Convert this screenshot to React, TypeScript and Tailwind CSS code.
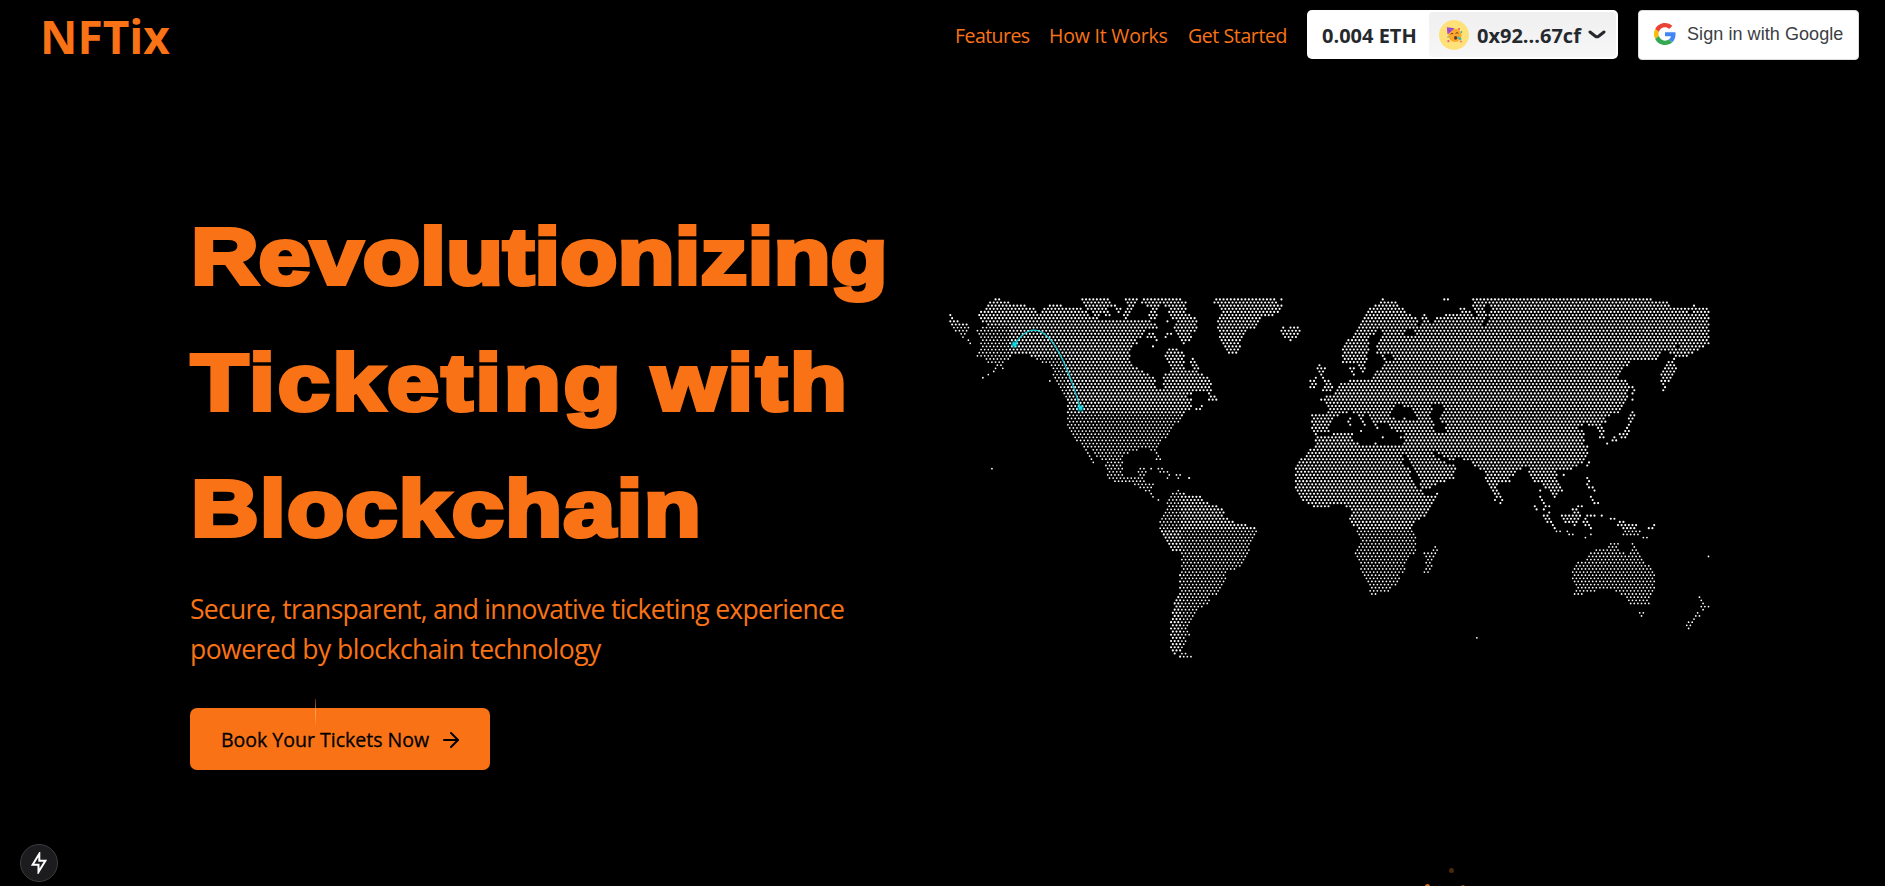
import React from "react";
import { ArrowRight } from "lucide-react";

type Point = [number, number];
type Region = { x: number; y: number; land: string[]; water?: string[]; islands?: string };

const STEP_X = 3.619;
const STEP_Y = 3.134;
const MAP_W = 768;
const MAP_H = 384;
const MAP_X = 947;
const MAP_Y = 296;

// Outlines are given in thirds of a pixel, relative to each region's origin.
const REGIONS: Region[] = [
  {
    x: 940,
    y: 290,
    land: [
      "29,66 36,66 42,85 56,92 72,96 90,108 84,130 70,145 60,132 40,124 29,105",
      "112,68 125,60 140,48 148,34 172,22 185,30 210,32 212,42 250,42 262,52 285,50 292,66 305,62 315,50 332,42 345,42 358,50 362,40 370,50 385,48 418,48 425,60 440,64 450,80 480,84 510,86 545,84 560,80 575,88 600,92 650,94 650,115 620,120 610,134 590,148 592,160 580,170 570,180 568,205 580,225 595,238 628,250 645,262 648,295 668,295 668,255 685,246 688,235 676,215 672,196 680,188 674,172 700,172 712,180 728,185 735,205 735,238 752,240 750,205 764,205 772,225 776,240 785,255 785,302 770,308 740,310 732,318 758,320 755,335 758,350 745,362 730,368 722,385 710,398 700,410 690,424 682,440 665,450 655,466 648,474 656,490 662,510 648,508 640,484 612,474 590,478 570,486 552,497 545,520 546,545 555,566 590,562 592,542 620,540 612,575 520,575 500,560 498,535 490,512 462,502 445,472 438,474 450,502 462,518 452,516 438,496 426,466 408,450 395,435 386,418 380,400 380,362 376,330 372,312 358,308 352,280 342,260 332,240 322,222 300,218 288,204 270,196 235,190 215,197 205,208 188,208 192,236 178,234 160,212 150,220 134,208 132,200 108,202 108,190 122,180 118,160 122,142 108,130 108,114 138,108 125,92 114,84",
      "422,22 512,22 512,42 530,44 545,60 535,70 520,50 505,56 515,82 500,82 485,70 460,82 455,66 430,50 424,40",
      "552,22 592,22 588,42 575,50 568,66 558,88 546,82 558,56",
      "602,22 712,22 738,32 740,70 770,85 775,118 750,124 755,150 735,152 725,168 714,150 700,125 705,95 690,75 680,48 660,45 650,58 650,90 620,95 625,65 632,50 605,40",
      "618,142 626,128 644,126 650,150 640,152 632,140",
    ],
    water: ["655,68 695,76 700,100 655,100"],
    islands:
      "84,149 89,158 172,222 166,232 160,242 144,251 127,262 328,270 155,535 638,167 680,130 690,130 676,138 680,92 770,356 778,356 632,535 655,535 665,535 660,544 670,544 682,544 682,553 708,553 719,553 714,562 746,563",
  },
  {
    x: 1200,
    y: 290,
    land: [
      "-5,246 8,250 25,262 36,280 30,302 -5,303",
      "22,298 34,300 34,315 48,318 57,338 45,333 20,332",
      "-5,340 8,340 6,352 -5,358",
      "38,32 56,22 225,22 228,40 247,42 232,68 205,80 185,82 170,110 140,120 125,150 118,170 116,200 108,190 82,192 70,165 55,140 50,90 62,70 58,50 40,42",
      "240,108 255,108 262,118 270,110 285,108 298,110 303,125 290,142 270,155 258,145 245,132",
      "423,218 422,180 435,155 455,140 475,110 490,80 505,52 525,42 545,24 552,30 565,24 572,32 590,32 592,45 615,60 640,75 656,92 652,108 600,112 550,112 530,120 510,145 502,165 505,185 498,215 495,246 478,243 472,225 465,215 445,218",
      "442,232 455,235 465,220 464,258 445,250",
      "548,112 600,110 655,108 664,100 668,70 678,70 685,102 700,90 715,78 745,68 785,70 785,510 768,506 770,535 756,572 655,572 640,540 625,510 612,488 608,468 612,435 605,425 590,425 565,415 562,400 548,396 534,398 542,424 528,414 515,386 500,364 488,372 500,406 488,404 474,384 460,368 445,364 430,368 412,375 400,385 388,400 384,424 332,426 332,372 380,370 386,355 378,338 360,330 362,324 372,324 372,316 400,314 408,294 415,278 440,278 445,268 500,262 515,268 525,250 535,235 550,218 545,200 527,192 530,150 545,130",
      "345,428 368,438 400,430 455,430 460,450 490,465 510,468 525,456 540,468 610,468 606,495 616,530 632,572 282,572 284,530 298,510 312,492 330,475 345,458",
      "348,222 360,222 378,235 368,250 385,270 399,290 397,302 362,302 372,285 362,262 350,240",
      "328,268 345,258 352,275 345,293 326,293",
    ],
    water: [
      "568,374 582,350 597,342 610,356 630,352 640,365 652,385 620,390 585,388",
      "698,342 728,342 726,360 718,375 722,395 738,402 732,425 705,425 700,400 692,370",
      "612,115 635,112 640,134 616,140",
      "554,190 576,190 576,209 554,208",
      "698,484 720,490 742,508 785,506 785,520 742,520 720,510",
    ],
    islands: "243,27 732,27 742,27 450,385 445,393 450,402 482,421 525,403 547,440 602,440 612,384 270,148",
  },
  {
    x: 1460,
    y: 290,
    land: [
      "35,22 575,22 580,30 625,32 632,48 685,50 690,70 696,42 705,42 715,52 747,52 749,162 735,170 715,180 695,190 670,202 645,202 640,186 655,165 645,165 632,190 625,182 602,183 600,202 585,212 515,210 500,225 485,245 470,264 500,266 508,290 500,318 498,335 488,352 475,370 440,376 435,396 420,398 430,420 434,444 416,444 410,410 405,402 385,408 375,402 352,410 370,420 375,445 372,460 384,468 384,495 375,512 350,528 330,542 300,542 290,545 290,575 215,575 200,530 175,538 150,560 150,575 75,575 70,545 50,532 30,512 -5,512 -5,50 15,50 35,65 48,80 45,60 36,45",
      "622,210 645,203 644,215 650,235 635,260 628,276 602,276 600,255 610,235",
      "508,370 524,370 514,395 507,420 500,442 476,442 475,430 490,428 498,400",
    ],
    water: ["66,108 72,84 82,80 86,92 78,108", "72,38 86,46 88,60 76,70"],
    islands:
      "608,282 614,291 608,300 508,290 515,290 521,300 515,309 515,327 515,365 460,440 455,450 467,450 440,459 310,553 385,516 380,525 380,563",
  },
  {
    x: 1060,
    y: 470,
    land: [
      "138,-8 180,-8 190,18 228,20 235,10 232,-8 258,-8 255,20 245,30 245,37 280,37 282,54 270,64 252,62 235,52 218,42 185,36 165,24 138,17",
      "315,86 332,68 350,64 376,66 385,75 422,74 430,92 445,98 470,104 490,114 492,142 518,148 524,160 555,158 562,170 588,168 592,185 580,205 570,225 562,255 545,290 515,298 500,305 497,330 487,355 472,374 450,380 447,400 428,412 410,418 405,432 395,450 382,475 390,496 372,496 376,515 370,532 360,545 345,554 336,545 330,530 326,490 330,460 334,440 338,400 350,378 356,370 356,310 362,290 360,252 345,244 330,240 318,215 303,190 296,178 298,150 308,132 322,112",
      "702,-8 702,40 712,70 728,95 750,104 765,110 800,109 842,100 858,108 875,112 868,140 870,160 888,170 890,185 895,195 905,210 895,230 882,245 892,265 902,300 915,325 928,350 928,373 945,375 948,366 990,362 1005,345 1016,330 1020,312 1035,298 1032,280 1045,262 1065,250 1068,225 1065,200 1055,178 1060,160 1080,146 1095,136 1110,120 1120,96 1134,76 1132,64 1110,74 1095,70 1075,55 1060,30 1045,-8",
    ],
    islands:
      "272,70 277,80 293,89 321,3 321,22 348,14 359,14 354,22 387,23 354,61 365,549 376,549 360,559 371,559 382,559 392,559",
  },
  {
    x: 1350,
    y: 470,
    land: [
      "198,-8 312,-8 308,18 275,36 240,54 208,54 212,35 200,18",
      "402,-8 500,-8 495,10 475,25 458,38 440,40 446,70 440,94 428,94 428,65 415,45 405,25",
      "535,-8 618,-8 622,25 632,40 632,58 615,84 605,70 598,55 580,50 570,40 545,20",
      "573,128 588,130 600,148 616,170 614,180 598,165 582,145",
      "630,130 650,135 665,125 668,110 685,104 692,130 692,140 680,157 672,167 655,159 638,159",
      "800,150 815,148 822,158 858,160 862,175 874,190 855,195 816,195 816,170 800,167",
      "668,290 682,273 708,266 718,248 735,238 772,236 780,218 803,216 803,232 815,245 835,255 843,240 845,216 853,230 865,246 878,270 897,282 914,300 917,335 907,370 895,401 838,403 826,380 808,374 798,362 760,352 735,364 705,364 695,375 668,375 680,350 666,330 662,305",
      "255,226 266,240 247,265 247,290 235,309 216,309 222,285 232,265 218,255 220,245 238,243",
    ],
    islands:
      "450,80 457,89 450,98 570,61 634,61 570,80 575,89 580,98 586,107 597,107 597,125 553,107 558,116 575,116 618,183 629,183 651,183 657,192 667,192 705,201 721,192 721,174 640,14 711,23 711,41 716,32 716,51 727,51 732,60 721,79 727,88 732,98 743,98 694,107 711,135 721,135 732,135 705,145 700,155 711,155 705,163 716,163 754,135 781,145 791,145 879,201 890,201 895,174 906,174 912,163 868,427 879,427 873,436 1046,380 1051,389 1057,399 1051,408 1063,408 1074,408 1057,418 1041,427 1036,436 1047,436 1031,446 1025,455 1014,455 1009,465 1020,465 1014,474 1074,258 379,502",
  },
];

const parse = (s: string, r: Region): Point[] =>
  s.split(" ").map((pair) => {
    const [a, b] = pair.split(",").map(Number);
    return [r.x + a / 3, r.y + b / 3];
  });

const inside = (px: number, py: number, poly: Point[]) => {
  let hit = false;
  for (let i = 0, j = poly.length - 1; i < poly.length; j = i++) {
    const [xi, yi] = poly[i];
    const [xj, yj] = poly[j];
    if (yi > py !== yj > py && px < ((xj - xi) * (py - yi)) / (yj - yi) + xi) hit = !hit;
  }
  return hit;
};

const isFine = (x: number, y: number) => {
  if (y < 325) return false;
  if (y < 357) return x < 1009;
  if (y < 413) return x < 1066;
  if (y < 528) return x < 1180;
  return x >= 1180;
};

function buildDots() {
  const land = REGIONS.flatMap((r) => r.land.map((s) => parse(s, r)));
  const water = REGIONS.flatMap((r) => (r.water ?? []).map((s) => parse(s, r)));
  const extra = new Set<string>();
  REGIONS.forEach((r) => {
    if (!r.islands) return;
    parse(r.islands, r).forEach(([x, y]) => {
      const row = Math.round((y - 299) / STEP_Y);
      const shift = row % 2 ? STEP_X / 2 : 0;
      extra.add(row + ":" + Math.round((x - 948 - shift) / STEP_X));
    });
  });
  let bold = "";
  let fine = "";
  for (let row = 0; row <= 114; row++) {
    const y = 299 + row * STEP_Y;
    for (let col = 0; col <= 210; col++) {
      const x = 948 + col * STEP_X + (row % 2 ? STEP_X / 2 : 0);
      const on =
        extra.has(row + ":" + col) ||
        (land.some((p) => inside(x, y, p)) && !water.some((p) => inside(x, y, p)));
      if (!on) continue;
      const thin = isFine(x, y);
      const r = thin ? 0.88 : 1.08;
      const d = `M${(x + 0.5 - MAP_X - r).toFixed(2)} ${(y + 0.4 - MAP_Y).toFixed(2)}a${r} ${r} 0 1 0 ${2 * r} 0a${r} ${r} 0 1 0 ${-2 * r} 0`;
      if (thin) fine += d;
      else bold += d;
    }
  }
  return { bold, fine };
}

const DOTS = buildDots();

function WorldMap() {
  return (
    <svg width={MAP_W} height={MAP_H} viewBox={`0 0 ${MAP_W} ${MAP_H}`} className="block">
      <path d={DOTS.bold} fill="#fff" />
      <path d={DOTS.fine} fill="#fff" />
      <path d="M67.5 48.5Q100.4 0.5 133.2 112" fill="none" stroke="#12cdd6" strokeWidth="1.3" />
      {[
        [67.5, 48.5],
        [133.4, 112],
      ].map(([cx, cy]) => (
        <g key={cx} fill="#06dbe6">
          <circle cx={cx} cy={cy} r="3.8" opacity="0.4" />
          <circle cx={cx} cy={cy} r="2" />
        </g>
      ))}
    </svg>
  );
}

function GoogleMark() {
  return (
    <svg width="22" height="22" viewBox="0 0 48 48" className="-mt-px">
      <path fill="#EA4335" d="M24 9.5c3.54 0 6.71 1.22 9.21 3.6l6.85-6.85C35.9 2.38 30.47 0 24 0 14.62 0 6.51 5.38 2.56 13.22l7.98 6.19C12.43 13.72 17.74 9.5 24 9.5z" />
      <path fill="#4285F4" d="M46.98 24.55c0-1.57-.15-3.09-.38-4.55H24v9.02h12.94c-.58 2.96-2.26 5.48-4.78 7.18l7.73 6c4.51-4.18 7.09-10.36 7.09-17.65z" />
      <path fill="#FBBC05" d="M10.53 28.59c-.48-1.45-.76-2.99-.76-4.59s.27-3.14.76-4.59l-7.98-6.19C.92 16.46 0 20.12 0 24c0 3.88.92 7.54 2.56 10.78l7.97-6.19z" />
      <path fill="#34A853" d="M24 48c6.48 0 11.93-2.13 15.89-5.81l-7.73-6c-2.15 1.45-4.92 2.3-8.16 2.3-6.26 0-11.57-4.22-13.47-9.91l-7.98 6.19C6.51 42.62 14.62 48 24 48z" />
    </svg>
  );
}

function PartyFace() {
  return (
    <svg width="17" height="17" viewBox="0 0 17 17">
      <circle cx="9" cy="9.3" r="6.6" fill="#fba92c" />
      <path d="M0.8 1.2L8.4 2.2L1.6 8.6z" fill="#8b3fd0" />
      <path d="M1 2.6l5.6 1.6M1.2 5.4l2.6 1" stroke="#d65be0" strokeWidth="0.8" />
      <path d="M4.6 8.2q1.4-1.6 2.6-.3M9.6 7.4q1.5-1.5 2.8 0" stroke="#6b3a1e" strokeWidth="1" fill="none" />
      <ellipse cx="9.6" cy="11.8" rx="1.6" ry="1.9" fill="#6b3a1e" />
      <path d="M11.6 11.2l3.6 2.4" stroke="#45b8a6" strokeWidth="2.2" />
      <circle cx="13" cy="3" r="1" fill="#e8505b" />
      <circle cx="15.4" cy="6" r="0.9" fill="#36b5a2" />
      <circle cx="2.4" cy="15.2" r="1.1" fill="#f0557a" />
      <circle cx="15" cy="15.6" r="0.9" fill="#f0557a" />
      <circle cx="2" cy="11" r="0.8" fill="#45b8a6" />
    </svg>
  );
}

function WalletButton() {
  return (
    <div className="flex h-[49px] w-[311px] items-center rounded-[5px] bg-white p-[2px] font-bold text-[#25292e]">
      <span className="mt-[2px] w-[120px] pl-[13px] text-[20px] leading-none whitespace-nowrap">0.004 ETH</span>
      <div className="flex h-[45px] flex-1 items-center rounded-[4px] bg-linear-to-b from-[#efefef] to-[#f7f7f7] pl-[10px]">
        <span className="flex size-[30px] shrink-0 items-center justify-center rounded-full bg-[#ffe17a]">
          <PartyFace />
        </span>
        <span className="mt-[2px] ml-[8px] w-[105px] text-[20px] leading-none whitespace-nowrap">0x92...67cf</span>
        <svg width="18" height="10" viewBox="0 0 18 10" className="ml-[6px]">
          <path d="M2 2L7.4 6.2Q9 7.4 10.6 6.2L16 2" fill="none" stroke="#25292e" strokeWidth="3" strokeLinecap="round" />
        </svg>
      </div>
    </div>
  );
}

function Header() {
  return (
    <header className="flex h-[69px] items-center pr-[26px] pl-[40px]">
      <span className="mt-[3px] text-[46px] leading-none font-bold">NFTix</span>
      <div className="ml-auto flex items-center gap-5">
        <nav className="mt-[2px] flex gap-5 text-[19.5px] leading-[28px] whitespace-nowrap">
          <a className="w-[74px] tracking-[-0.55px]">Features</a>
          <a className="w-[119px] tracking-[-0.2px]">How It Works</a>
          <a className="w-[99px] tracking-[-0.4px]">Get Started</a>
        </nav>
        <WalletButton />
        <button className="flex h-[50px] w-[221px] items-center rounded-[4px] border border-[#dadce0] bg-white pl-[15px] font-['Liberation_Sans',sans-serif] text-[18px] tracking-[0.07px] text-[#3c4043]">
          <GoogleMark />
          <span className="ml-[11px] whitespace-nowrap">Sign in with Google</span>
        </button>
      </div>
    </header>
  );
}

function Hero() {
  return (
    <main className="flex pl-[190px]">
      <section className="w-[757px] shrink-0 pt-[125px]">
        <h1 className="ml-px w-[620px] origin-left scale-x-[1.17] font-['Liberation_Sans',Arial,sans-serif] text-[80px] leading-[126px] font-bold whitespace-nowrap [-webkit-text-stroke:4.2px_#f97316]">
          <span className="block">Revolutionizing</span>
          <span className="block tracking-[2.2px]">Ticketing with</span>
          <span className="block tracking-[1px]">Blockchain</span>
        </h1>
        <p className="mt-[17px] text-[26.5px] leading-[40px] whitespace-nowrap">
          <span className="block tracking-[-0.7px]">Secure, transparent, and innovative ticketing experience</span>
          <span className="block tracking-[-0.52px]">powered by blockchain technology</span>
        </p>
        <button className="relative mt-[39px] flex h-[62px] w-[300px] items-center rounded-[7px] bg-[#f97316] pl-[31px] text-[19.5px] font-medium text-black">
          <span className="mt-[2px] w-[208px] text-left whitespace-nowrap [-webkit-text-stroke:0.3px_#000]">
            Book Your Tickets Now
          </span>
          <ArrowRight className="mt-px ml-[10px] size-6" strokeWidth={2} />
          <span className="absolute -top-[9px] left-[125px] h-[28px] w-px bg-linear-to-b from-orange-500/40 via-orange-300/70 to-transparent" />
        </button>
      </section>
      <div className="pt-[227px]">
        <WorldMap />
      </div>
    </main>
  );
}

export default function App() {
  return (
    <div className="relative h-[886px] w-[1885px] overflow-hidden bg-black font-['Open_Sans','Noto_Sans',sans-serif] text-[#f97316]">
      <Header />
      <Hero />
      <div className="absolute bottom-[4px] left-[20px] flex size-[38px] items-center justify-center rounded-full border border-[#3d3d3f] bg-[#1c1c1e]">
        <svg width="16" height="22" viewBox="0 0 16 22" fill="none" stroke="#fff" strokeWidth="2">
          <path d="M8.3 1.8L1.6 12.8H7.5V20L14.4 8.8H8.3z" />
        </svg>
      </div>
      <span className="absolute top-[868px] left-[1449px] size-[5px] rounded-full bg-[#4a280a]" />
      <span className="absolute top-[884px] left-[1425px] size-[5px] rounded-full bg-[#d9701f]" />
      <span className="absolute top-[885px] left-[1461px] size-[4px] rounded-full bg-[#8a4a14]" />
    </div>
  );
}
